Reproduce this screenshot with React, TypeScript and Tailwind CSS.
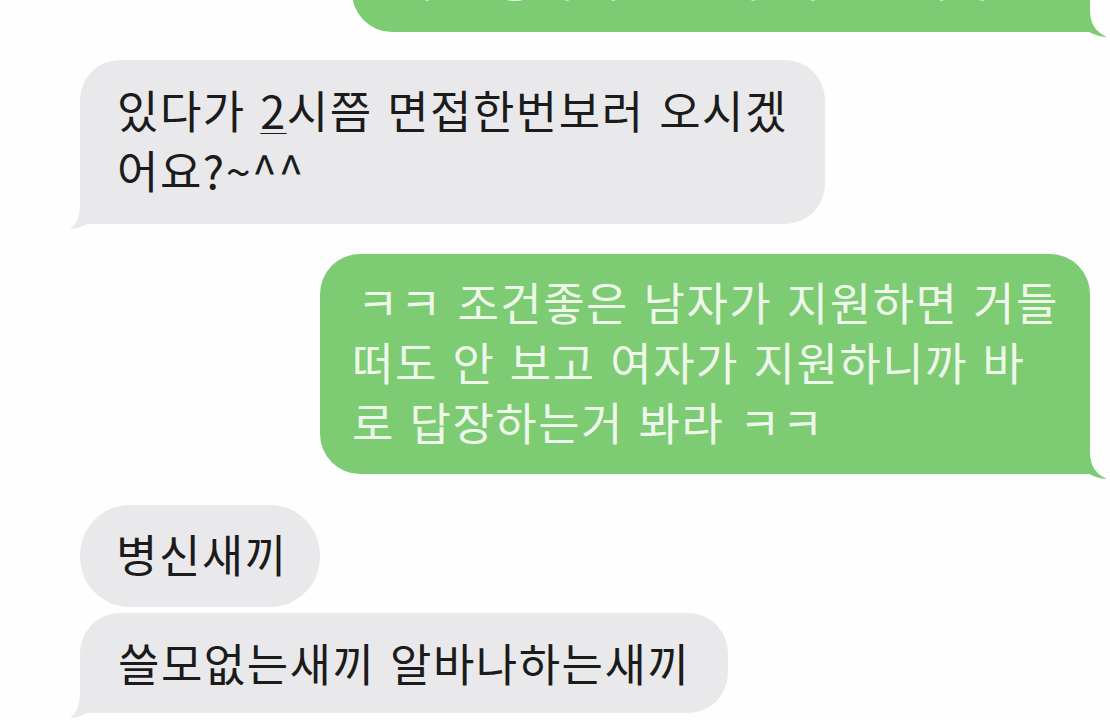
import React from 'react';

type Side = 'left' | 'right';

function Tail({ side, color }: { side: Side; color: string }) {
  if (side === 'right') {
    return (
      <svg className={'absolute -right-[17px] -bottom-[5px] ' + color} width="57" height="45" viewBox="0 0 57 45">
        <path
          d="M0 0 H40 V18 C40 32 46 40 57 45 C48 45 37 40 23 30 C18 36 12 40 4 40 H0 Z"
          fill="currentColor"
        />
      </svg>
    );
  }
  return (
    <svg className={'absolute -left-[10px] -bottom-[5px] ' + color} width="52" height="45" viewBox="0 0 52 45">
      <path
        d="M52 0 H10 V18 C10 32 7 40 0 45 C9 45 19 40 30 30 C35 36 41 40 48 40 H52 Z"
        fill="currentColor"
      />
    </svg>
  );
}

interface BubbleProps {
  side: Side;
  tail?: boolean;
  className?: string;
  children: React.ReactNode;
}

function Bubble({ side, tail = false, className = '', children }: BubbleProps) {
  const mine = side === 'right';
  return (
    <div
      className={
        'relative rounded-[40px] text-[45px] leading-[60px] tracking-[1.5px] [word-spacing:3px] ' +
        (mine
          ? 'self-end bg-[#7dcb73] text-[#eef8ea] '
          : 'self-start bg-[#e9e9eb] text-[#1b1b1b] ') +
        (tail ? (mine ? 'rounded-br-none ' : 'rounded-bl-none ') : '') +
        className
      }
    >
      {tail && <Tail side={side} color={mine ? 'text-[#7dcb73]' : 'text-[#e9e9eb]'} />}
      <div className="relative whitespace-nowrap">{children}</div>
    </div>
  );
}

export default function App() {
  return (
    <div className="h-[720px] w-[1110px] overflow-hidden bg-[#fefefe] font-['Noto_Sans_CJK_KR',sans-serif]">
      <div className="flex flex-col pl-[80px] pr-[20px]">
        {/* 위쪽 잘린 말풍선 */}
        <Bubble side="right" tail className="-mt-[70px] w-[738px] pl-[40px] pr-[30px] pt-[18px] pb-[24px]">
          네 안녕하세요 알바 지원합니다
        </Bubble>

        <Bubble side="left" tail className="mt-[28px] w-[745px] pl-[37px] pr-[20px] pt-[20px] pb-[24px]">
          있다가 <span className="underline decoration-1 underline-offset-4">2</span>시쯤 면접한번보러 오시겠
          <br />
          어요?~^^
        </Bubble>

        <Bubble side="right" tail className="mt-[30px] w-[770px] pl-[32px] pr-[20px] pt-[18px] pb-[22px]">
          <span className="ml-[5px]">ㅋㅋ 조건좋은 남자가 지원하면 거들</span>
          <br />
          떠도 안 보고 여자가 지원하니까 바
          <br />
          로 답장하는거 봐라 ㅋㅋ
        </Bubble>

        <Bubble side="left" className="mt-[31px] w-[240px] rounded-[50px] pl-[36px] pr-[20px] pt-[19px] pb-[23px]">
          병신새끼
        </Bubble>

        <Bubble side="left" tail className="mt-[6px] w-[648px] pl-[38px] pr-[20px] pt-[20px] pb-[20px]">
          쓸모없는새끼 알바나하는새끼
        </Bubble>
      </div>
    </div>
  );
}
